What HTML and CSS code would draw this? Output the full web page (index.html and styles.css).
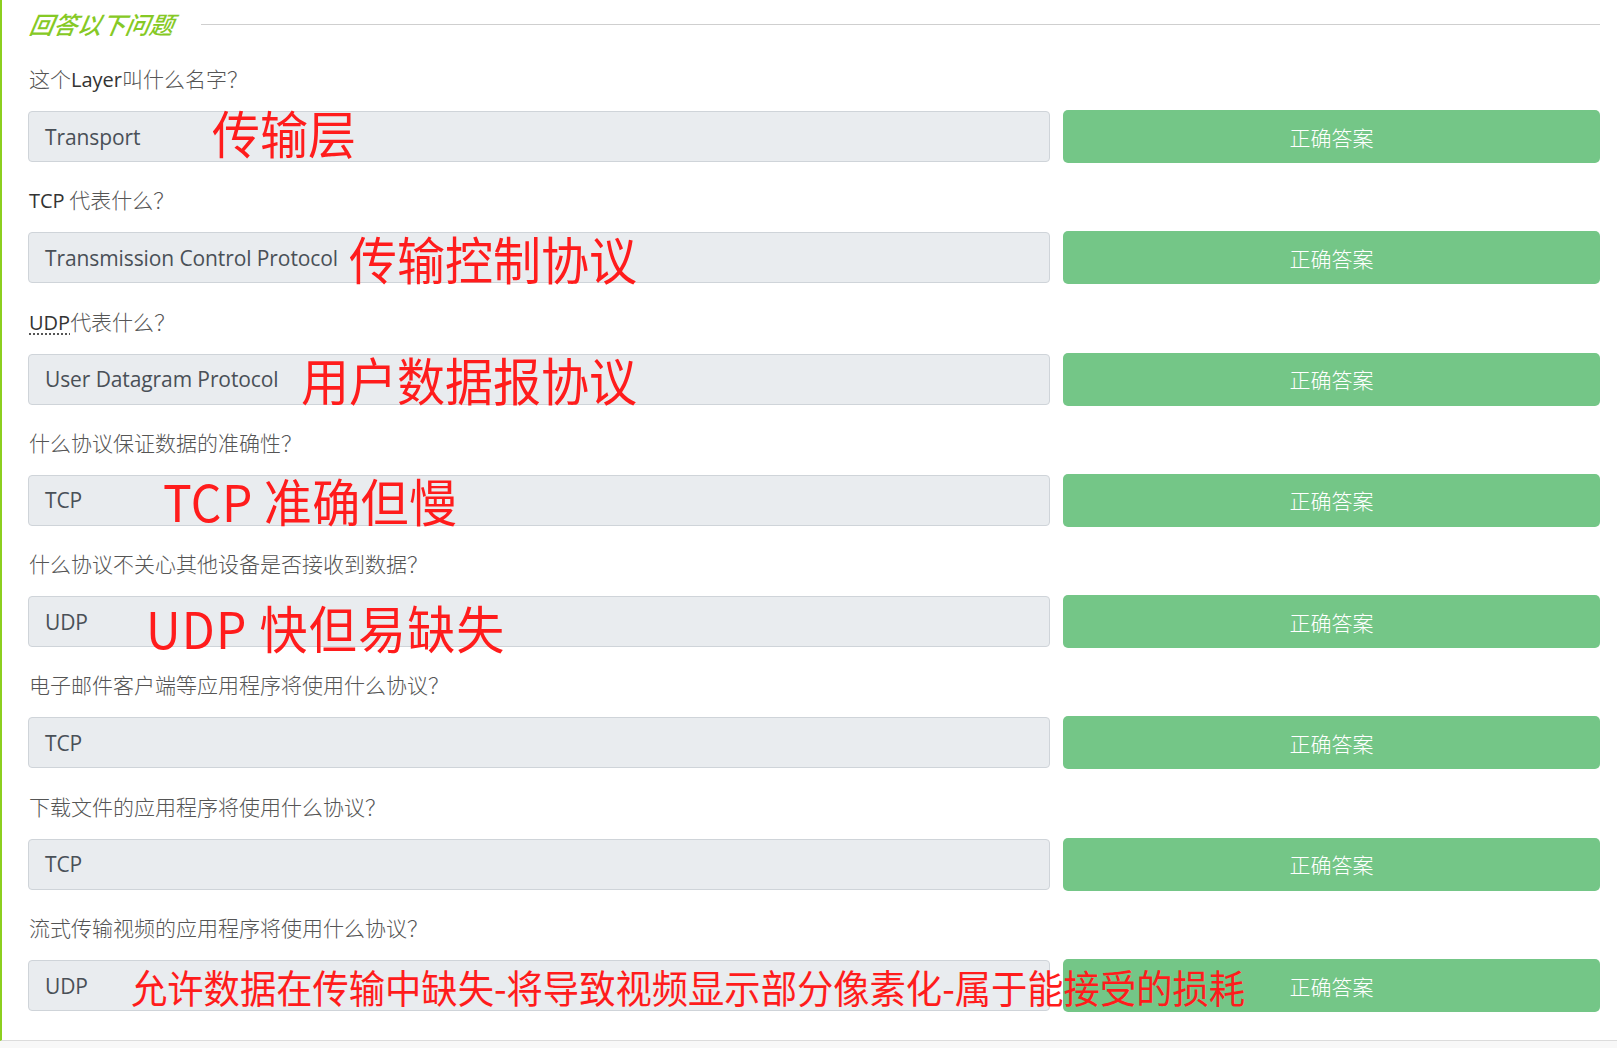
FILE: index.html
```html
<!DOCTYPE html>
<html lang="zh-CN">
<head>
<meta charset="utf-8">
<title>回答以下问题</title>
<link rel="stylesheet" href="styles.css">
</head>
<body>
<div class="panel">
  <div class="title-row">
    <h2 class="title">回答以下问题</h2>
    <div class="title-line"></div>
  </div>
  <div class="rows">
    <div class="qa">
      <div class="q">这个<span class="lat">Layer</span>叫什么名字<span class="qm">？</span></div>
      <div class="group">
        <div class="field">
          <div class="answer">Transport</div>
          <div class="note n1">传输层</div>
        </div>
        <button class="btn">正确答案</button>
      </div>
    </div>
    <div class="qa">
      <div class="q"><span class="lat">TCP</span> 代表什么<span class="qm">？</span></div>
      <div class="group">
        <div class="field">
          <div class="answer">Transmission Control Protocol</div>
          <div class="note n2">传输控制协议</div>
        </div>
        <button class="btn">正确答案</button>
      </div>
    </div>
    <div class="qa">
      <div class="q"><abbr class="lat">UDP</abbr>代表什么<span class="qm">？</span></div>
      <div class="group">
        <div class="field">
          <div class="answer">User Datagram Protocol</div>
          <div class="note n3">用户数据报协议</div>
        </div>
        <button class="btn">正确答案</button>
      </div>
    </div>
    <div class="qa">
      <div class="q">什么协议保证数据的准确性<span class="qm">？</span></div>
      <div class="group">
        <div class="field">
          <div class="answer">TCP</div>
          <div class="note n4">TCP 准确但慢</div>
        </div>
        <button class="btn">正确答案</button>
      </div>
    </div>
    <div class="qa">
      <div class="q">什么协议不关心其他设备是否接收到数据<span class="qm">？</span></div>
      <div class="group">
        <div class="field">
          <div class="answer">UDP</div>
          <div class="note n5">UDP 快但易缺失</div>
        </div>
        <button class="btn">正确答案</button>
      </div>
    </div>
    <div class="qa">
      <div class="q">电子邮件客户端等应用程序将使用什么协议<span class="qm">？</span></div>
      <div class="group">
        <div class="field">
          <div class="answer">TCP</div>
        </div>
        <button class="btn">正确答案</button>
      </div>
    </div>
    <div class="qa">
      <div class="q">下载文件的应用程序将使用什么协议<span class="qm">？</span></div>
      <div class="group">
        <div class="field">
          <div class="answer">TCP</div>
        </div>
        <button class="btn">正确答案</button>
      </div>
    </div>
    <div class="qa">
      <div class="q">流式传输视频的应用程序将使用什么协议<span class="qm">？</span></div>
      <div class="group">
        <div class="field">
          <div class="answer">UDP</div>
          <div class="note n6">允许数据在传输中缺失-将导致视频显示部分像素化-属于能接受的损耗</div>
        </div>
        <button class="btn">正确答案</button>
      </div>
    </div>
  </div>
</div>
</body>
</html>
```

FILE: styles.css
```css
html, body {
  margin: 0;
  padding: 0;
}
body {
  background: #f8f8f8;
  font-family: "Open Sans", "Noto Sans CJK SC", sans-serif;
  height: 1048px;
  overflow: hidden;
}
.panel {
  background: #fff;
  border-left: 2px solid #8ccf1f;
  border-bottom: 1px solid #dcdcdc;
  padding: 0 17px 28px 26px;
}
.title-row {
  display: flex;
  align-items: center;
  height: 48px;
}
.title {
  margin: 0;
  font-family: "Noto Sans CJK SC", sans-serif;
  font-size: 24px;
  font-style: italic;
  font-weight: 500;
  color: #86c925;
  line-height: 1;
  transform: skewX(-10deg);
  padding-left: 2px;
}
.title-line {
  flex: 1;
  margin-left: 27px;
  border-top: 1px solid #cfcfcf;
  height: 0;
}
.rows {
  display: flex;
  flex-direction: column;
  gap: 23.3px;
  padding-top: 17px;
}
.q {
  height: 30px;
  line-height: 26px;
  margin-bottom: 15px;
  font-family: "Noto Sans CJK SC", sans-serif;
  font-weight: 300;
  font-size: 21px;
  color: #555;
  padding-left: 1px;
}
.q .lat {
  font-family: "Open Sans", sans-serif;
  font-weight: 400;
  color: #333;
  font-size: 20px;
}
.q .qm {
  font-family: "Noto Sans CJK TC", sans-serif;
}
abbr.lat {
  text-decoration: underline dotted #555;
  text-underline-offset: 4px;
}
.group {
  display: grid;
  grid-template-columns: 1fr 537px;
  column-gap: 13px;
  align-items: center;
  height: 53px;
}
.field {
  position: relative;
  height: 51px;
  box-sizing: border-box;
  border: 1px solid #cfd4d9;
  border-radius: 4px;
  background: #e9ecef;
  display: flex;
  align-items: center;
  padding-left: 16px;
}
.answer {
  font-family: "Open Sans", sans-serif;
  font-size: 21px;
  color: #495057;
  letter-spacing: -0.1px;
}
.btn {
  height: 53px;
  border: 0;
  border-radius: 5px;
  background: #74c687;
  color: #fff;
  font-family: "Noto Sans CJK SC", sans-serif;
  font-weight: 300;
  font-size: 21px;
  padding: 0;
  position: relative;
  z-index: 0;
}
.note {
  position: absolute;
  top: 50%;
  transform: translateY(-50%) scaleY(1.06);
  white-space: nowrap;
  color: #ff1c1c;
  font-family: "Noto Sans CJK SC", sans-serif;
  font-size: 48px;
  line-height: 1;
  z-index: 2;
}
.n1 { left: 183px; margin-top: -5px; }
.n2 { left: 320px; }
.n3 { left: 272px; }
.n4 { left: 134px; letter-spacing: 0.4px; }
.n5 { left: 117px; margin-top: 5px; letter-spacing: 1.2px; }
.n6 { left: 102px; font-size: 36.3px; }
```
